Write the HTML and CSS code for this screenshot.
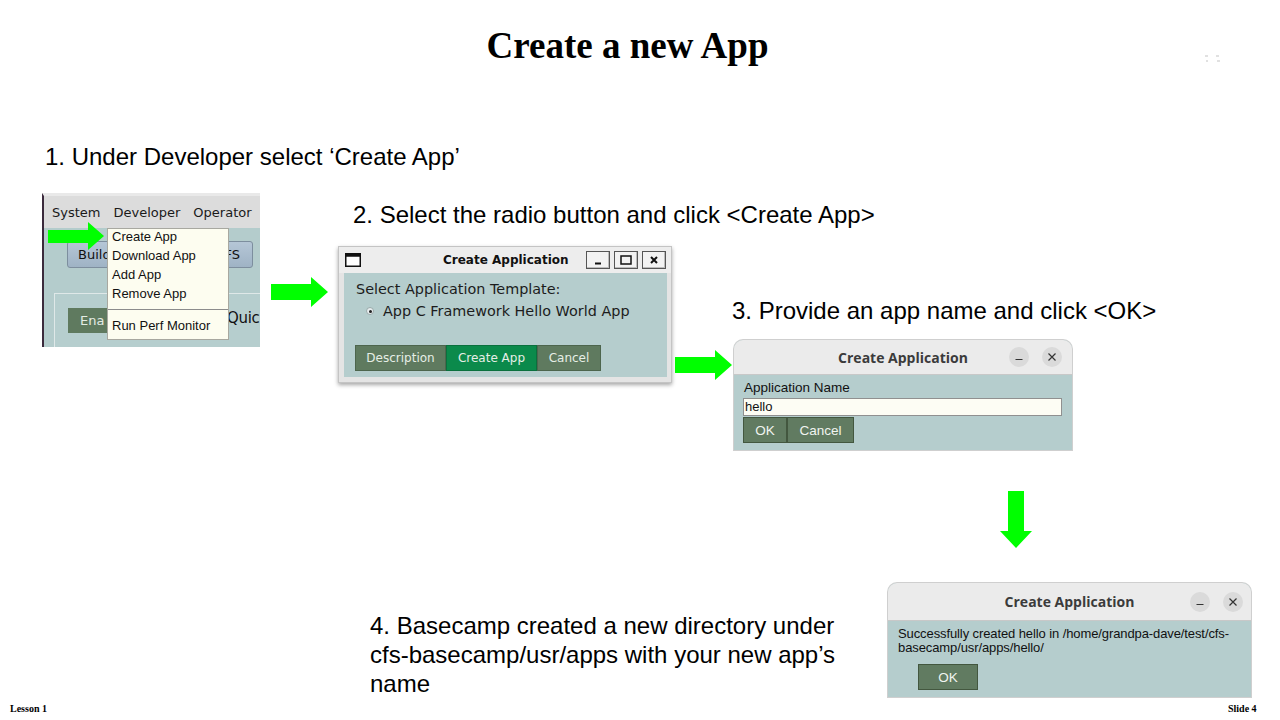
FILE: index.html
```html
<!DOCTYPE html>
<html>
<head>
<meta charset="utf-8">
<link rel="stylesheet" href="styles.css">
</head>
<body>
<div class="slide">
  <h1 class="title">Create a new App</h1>
  <svg class="corner-mark" width="18" height="10" viewBox="0 0 18 10"><path d="M1 2h3M2 7h2M12 2h3M13 7h3" stroke="#c4c4c4" stroke-width="1.2" fill="none"/></svg>

  <p class="step step1">1. Under Developer select ‘Create App’</p>
  <p class="step step2">2. Select the radio button and click &lt;Create App&gt;</p>
  <p class="step step3">3. Provide an app name and click &lt;OK&gt;</p>
  <p class="step step4">4. Basecamp created a new directory under<br>cfs-basecamp/usr/apps with your new app’s<br>name</p>

  <!-- screenshot 1: menu -->
  <div class="shot1">
    <div class="menubar"><span>System</span><span>Developer</span><span>Operator</span></div>
    <div class="shot1-body">
      <div class="build-btn"><span>Build</span><span>FS</span></div>
      <div class="panel">
        <div class="ena-btn">Ena</div>
        <span class="quic">Quic</span>
      </div>
    </div>
    <div class="menu">
      <div class="mi">Create App</div>
      <div class="mi">Download App</div>
      <div class="mi">Add App</div>
      <div class="mi">Remove App</div>
      <div class="sep"></div>
      <div class="mi">Run Perf Monitor</div>
    </div>
    <svg class="arrow-menu" width="57" height="29" viewBox="0 0 57 29"><polygon points="0,8 40,8 40,0 56,14 40,28 40,21 0,21" fill="#00ff00"/></svg>
  </div>

  <svg class="arrow a1" width="59" height="31" viewBox="0 0 59 31"><polygon points="1,7 41,7 41,0 58,15 41,30 41,23 1,23" fill="#00ff00"/></svg>
  <svg class="arrow a2" width="58" height="31" viewBox="0 0 58 31"><polygon points="0,7 40,7 40,0 57,15 40,30 40,23 0,23" fill="#00ff00"/></svg>
  <svg class="arrow a3" width="33" height="58" viewBox="0 0 33 58"><polygon points="8,0 24,0 24,40 32,40 16,57 0,40 8,40" fill="#00ff00"/></svg>

  <!-- dialog 2 -->
  <div class="win2">
    <div class="w2-title">
      <svg class="w2-icon" width="16" height="14" viewBox="0 0 16 14"><rect x="0.75" y="0.75" width="14.5" height="12.5" fill="#fff" stroke="#111" stroke-width="1.5"/><rect x="0.75" y="0.75" width="14.5" height="3" fill="#111"/></svg>
      <span class="w2-name">Create Application</span>
      <div class="w2-btns">
        <span class="w2-b"><svg width="10" height="10" viewBox="0 0 10 10"><path d="M2 8.5h6" stroke="#111" stroke-width="2"/></svg></span>
        <span class="w2-b"><svg width="12" height="10" viewBox="0 0 12 10"><rect x="1" y="1" width="10" height="8" fill="none" stroke="#111" stroke-width="1.5"/></svg></span>
        <span class="w2-b"><svg width="10" height="10" viewBox="0 0 10 10"><path d="M2 2l6 6M8 2l-6 6" stroke="#111" stroke-width="2"/></svg></span>
      </div>
    </div>
    <div class="w2-body">
      <div class="w2-label">Select Application Template:</div>
      <div class="w2-radio"><span class="radio"></span>App C Framework Hello World App</div>
      <div class="w2-actions">
        <span class="tk-btn">Description</span><span class="tk-btn active">Create App</span><span class="tk-btn">Cancel</span>
      </div>
    </div>
  </div>

  <!-- dialog 3 -->
  <div class="gwin win3">
    <div class="g-title">
      <span class="g-name">Create Application</span>
      <span class="g-circ g-min"><svg width="10" height="10" viewBox="0 0 10 10"><path d="M1.5 7.5h7" stroke="#333" stroke-width="1.2"/></svg></span>
      <span class="g-circ g-close"><svg width="10" height="10" viewBox="0 0 10 10"><path d="M1.5 1.5l7 7M8.5 1.5l-7 7" stroke="#333" stroke-width="1.2"/></svg></span>
    </div>
    <div class="g-body w3-body">
      <div class="w3-label">Application Name</div>
      <div class="w3-input">hello</div>
      <div class="w3-actions"><span class="g-btn ok">OK</span><span class="g-btn cancel">Cancel</span></div>
    </div>
  </div>

  <!-- dialog 4 -->
  <div class="gwin win4">
    <div class="g-title t4">
      <span class="g-name">Create Application</span>
      <span class="g-circ g-min"><svg width="10" height="10" viewBox="0 0 10 10"><path d="M1.5 7.5h7" stroke="#333" stroke-width="1.2"/></svg></span>
      <span class="g-circ g-close"><svg width="10" height="10" viewBox="0 0 10 10"><path d="M1.5 1.5l7 7M8.5 1.5l-7 7" stroke="#333" stroke-width="1.2"/></svg></span>
    </div>
    <div class="g-body w4-body">
      <div class="w4-msg">Successfully created hello in /home/grandpa-dave/test/cfs-<br>basecamp/usr/apps/hello/</div>
      <span class="g-btn ok4">OK</span>
    </div>
  </div>

  <div class="footer-l">Lesson 1</div>
  <div class="footer-r">Slide 4</div>
</div>
</body>
</html>
```

FILE: styles.css
```css
* { box-sizing: border-box; }
html, body { margin: 0; padding: 0; background: #fff; }
.slide { position: relative; width: 1280px; height: 720px; overflow: hidden; background: #fff; font-family: "Liberation Sans", Arial, sans-serif; }

.title { position: absolute; left: 0; right: 0; top: 24px; margin: 0; text-align: center; padding-right: 25px;
  font-family: "Liberation Serif", "Times New Roman", serif; font-weight: 700; font-size: 37px; line-height: 44px; color: #000; }
.corner-mark { position: absolute; left: 1204px; top: 54px; }

.step { position: absolute; margin: 0; font-size: 24px; line-height: 28px; color: #000; white-space: nowrap; }
.step1 { left: 45px; top: 143px; }
.step2 { left: 353px; top: 201px; }
.step3 { left: 732px; top: 297px; }
.step4 { left: 370px; top: 611px; line-height: 29px; }

/* screenshot 1 */
.shot1 { position: absolute; left: 42px; top: 193px; width: 218px; height: 154px; overflow: hidden;
  background: #b4cccc; border-top: 3px solid #e9e9e9; border-left: 2px solid #3b2a3c; }
.menubar { height: 32px; background: #dcdcdc; display: flex; align-items: center; gap: 13px; padding-left: 8px;
  font-family: "DejaVu Sans", sans-serif; font-size: 13px; color: #1a1a1a; }
.shot1-body { position: relative; height: 119px; padding: 13px 0 0 23px; }
.build-btn { width: 186px; height: 27px; border: 1px solid #7d8e9e; border-radius: 3px; background: linear-gradient(#b5c6d6, #9fb3c5);
  display: flex; justify-content: space-between; align-items: center; padding: 0 12px 0 10px;
  font-family: "DejaVu Sans", sans-serif; font-size: 13px; color: #111; }
.panel { margin: 25px 0 0 -13px; height: 60px; border: 1px solid #dfe8e8; border-right: none; background: #b6cece;
  display: flex; align-items: flex-start; padding: 14px 0 0 13px; position: relative; }
.ena-btn { width: 40px; height: 25px; background: #5f7a5f; color: #e4ece4; font-family: "DejaVu Sans", sans-serif; font-size: 13px;
  display: flex; align-items: center; padding-left: 12px; }
.quic { position: absolute; left: 172px; top: 15px; font-family: "DejaVu Sans", sans-serif; font-size: 15px; letter-spacing: -0.3px; color: #111; }
.menu { position: absolute; left: 63px; top: 32px; width: 122px; height: 112px; background: #fdfdf0; border: 1px solid #a8a8a0;
  font-family: "Liberation Sans", Arial, sans-serif; font-size: 13px; color: #111; padding-top: 0; }
.mi { height: 19px; line-height: 15px; padding-left: 4px; }
.sep { height: 1px; background: #8c8c8c; margin: 4px 0 8px 0; }
.arrow-menu { position: absolute; left: 4px; top: 26px; }

.arrow { position: absolute; }
.a1 { left: 270px; top: 277px; }
.a2 { left: 675px; top: 350px; }
.a3 { left: 1000px; top: 491px; }

/* dialog 2 */
.win2 { position: absolute; left: 338px; top: 246px; width: 334px; height: 137px; background: #e4e4e4; border: 1px solid #c4c4c4;
  box-shadow: 0 2px 4px rgba(0,0,0,0.35); padding: 0 4px 5px 5px; display: flex; flex-direction: column; }
.w2-title { height: 26px; display: flex; align-items: center; position: relative; background: #ededed; margin: 0 -4px 0 -5px; padding: 0 5px 0 6px; }
.w2-icon { flex: none; }
.w2-name { position: absolute; left: 104px; top: 6px; font-family: "DejaVu Sans", sans-serif; font-weight: 700; font-size: 12px; color: #111; }
.w2-btns { margin-left: auto; display: flex; gap: 4px; }
.w2-b { width: 24px; height: 18px; border: 1px solid #555; background: #f2f2f2; display: flex; align-items: center; justify-content: center; box-shadow: inset -1px -1px 0 #bbb; }
.w2-body { flex: 1; background: #b5cdcd; padding: 7px 0 0 12px; font-family: "DejaVu Sans", sans-serif; color: #1c1c1c; display: flex; flex-direction: column; }
.w2-label { font-size: 14.4px; line-height: 18px; }
.w2-radio { font-size: 14.4px; line-height: 18px; margin-top: 4px; padding-left: 10px; display: flex; align-items: center; gap: 9px; }
.radio { width: 8px; height: 8px; border-radius: 50%; background: #e8eef0; border: 1px solid #9aa; position: relative; }
.radio::after { content: ""; position: absolute; left: 1.5px; top: 1.5px; width: 3px; height: 3px; border-radius: 50%; background: #222; }
.w2-actions { margin-top: auto; margin-bottom: 6px; display: flex; margin-left: -1px; }
.tk-btn { height: 26px; display: flex; align-items: center; justify-content: center; background: #5f7a5f; color: #e6eee6; font-size: 12px;
  border: 1px solid #4d654d; padding: 0 10px; }
.tk-btn:nth-child(1) { width: 91px; }
.tk-btn.active { width: 91px; background: #0b8a4b; border-color: #0a703d; }
.tk-btn:nth-child(3) { width: 64px; }

/* GTK style dialogs */
.gwin { position: absolute; border-radius: 9px 9px 0 0; overflow: hidden; box-shadow: 0 0 0 1px #cfcfcf; display: flex; flex-direction: column; background: #b5cdcd; }
.g-title { flex: none; height: 35px; background: #ebebeb; border-bottom: 1px solid #c8c8c8; display: flex; align-items: center; justify-content: center; position: relative; }
.g-name { font-family: "Open Sans", "DejaVu Sans", sans-serif; font-weight: 700; font-size: 14px; color: #3b3b3b; }
.g-circ { position: absolute; width: 20px; height: 20px; border-radius: 50%; background: #dadada; display: flex; align-items: center; justify-content: center; }
.g-body { flex: 1; font-family: "Liberation Sans", Arial, sans-serif; font-size: 13px; color: #111; }
.g-btn { display: inline-flex; align-items: center; justify-content: center; background: #617b61; color: #f0f4f0; border: 1px solid #43573f; font-size: 13.5px; }

.win3 { left: 734px; top: 340px; width: 338px; height: 110px; }
.win3 .g-min { left: 275px; top: 7px; }
.win3 .g-close { left: 308px; top: 7px; }
.w3-body { padding: 5px 10px 0 9px; display: flex; flex-direction: column; }
.w3-label { font-size: 13.5px; line-height: 16px; padding-left: 1px; }
.w3-input { height: 18px; background: #fdfdf4; border: 1px solid #909090; font-size: 13px; line-height: 16px; padding-left: 1px; margin-top: 2px; width: 319px; }
.w3-actions { display: flex; margin-top: 1px; }
.w3-actions .ok { width: 44px; height: 26px; }
.w3-actions .cancel { width: 67px; height: 26px; }

.win4 { left: 888px; top: 583px; width: 363px; height: 114px; }
.t4 { height: 38px; }
.win4 .g-min { left: 302px; top: 9px; }
.win4 .g-close { left: 335px; top: 9px; }
.w4-body { padding: 6px 8px 0 10px; }
.w4-msg { font-size: 13px; line-height: 14px; letter-spacing: -0.1px; }
.ok4 { width: 60px; height: 26px; margin: 9px 0 0 20px; }

.footer-l, .footer-r { position: absolute; top: 703px; font-family: "Liberation Serif", "Times New Roman", serif; font-weight: 700; font-size: 10px; color: #000; }
.footer-l { left: 10px; }
.footer-r { left: 1228px; }
```
